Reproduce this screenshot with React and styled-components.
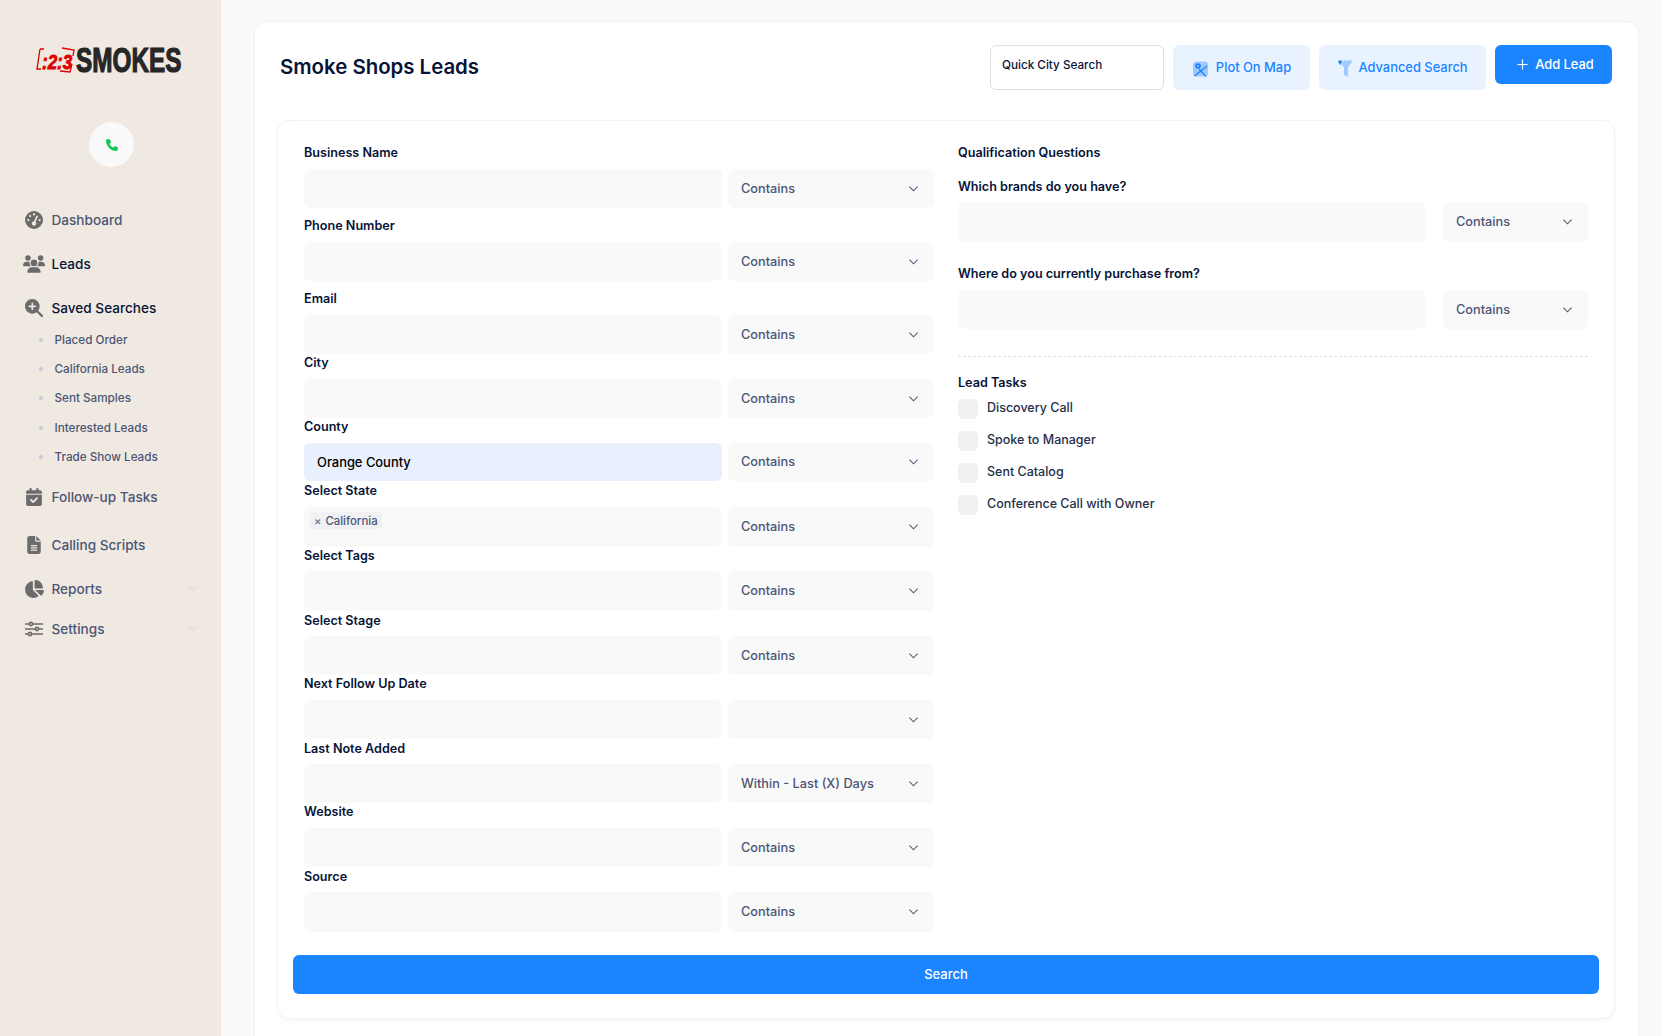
import React from 'react';
import styled, { createGlobalStyle } from 'styled-components';
import { FaGaugeHigh, FaUsers, FaMagnifyingGlassPlus, FaCalendarCheck, FaFileLines, FaChartPie, FaPhone } from 'react-icons/fa6';

const ink = '#071437';
const gray = '#4b5675';
const blue = '#1b84ff';
const solid = '#f9f9f9';

const GlobalStyle = createGlobalStyle`
  html, body {
    margin: 0;
    height: 100%;
    overflow: hidden;
  }
  body {
    font-family: Inter, "Liberation Sans", sans-serif;
    background: #f9fafc;
  }
  * {
    box-sizing: border-box;
  }
`;

const Page = styled.div`
  display: grid;
  grid-template-columns: 221px 1fr;
  height: 1036px;
  overflow: hidden;
`;

const Sidebar = styled.aside`
  background: #f0e9e1;
  padding-top: 40px;
`;

const LogoWrap = styled.div`
  height: 38px;
  padding-left: 34px;
`;

const CallButton = styled.button`
  display: flex;
  align-items: center;
  justify-content: center;
  width: 45px;
  height: 45px;
  margin: 44px 0 0 89px;
  padding: 0;
  border: 0;
  border-radius: 50%;
  background: ${solid};
  color: #17c653;
  font-size: 12px;
`;

const Nav = styled.nav`
  margin-top: 31px;
  padding: 0 24px 0 22px;
`;

const NavItem = styled.div`
  display: flex;
  align-items: center;
  height: ${p => p.$h || 44}px;
  margin-top: ${p => p.$mt || 0}px;
  font-size: 13.6px;
  font-weight: 500;
  color: ${p => (p.$active ? ink : gray)};
`;

const NavIcon = styled.span`
  display: flex;
  align-items: center;
  justify-content: center;
  flex: 0 0 24px;
  margin-right: 5.5px;
  color: #6b6b6b;
  font-size: ${p => p.$size || 18}px;
`;

const NavLabel = styled.span`
  flex: 1;
`;

const SubList = styled.div`
  margin-top: -5px;
`;

const SubItem = styled.div`
  display: flex;
  align-items: center;
  height: 29.4px;
  padding-left: 16.5px;
  font-size: 11.7px;
  font-weight: 500;
  color: ${gray};

  &::before {
    content: '';
    width: 4px;
    height: 4px;
    margin-right: 12px;
    border-radius: 50%;
    background: #c4cada;
  }
`;

const Main = styled.main`
  padding: 21px 22px 0 33px;
`;

const Card = styled.section`
  height: 1100px;
  padding: 0 23px 0 22px;
  background: #fff;
  border: 1px solid #f1f1f4;
  border-radius: 12px;
  box-shadow: 0 3px 4px rgba(0, 0, 0, 0.02);
`;

const Header = styled.header`
  display: flex;
  align-items: flex-start;
  justify-content: space-between;
  height: 98px;
  padding: 23px 3px 0 3px;
`;

const Title = styled.h1`
  margin: 10px 0 0;
  font-size: 20.4px;
  line-height: 24px;
  font-weight: 600;
  color: ${ink};
`;

const Actions = styled.div`
  display: flex;
  gap: 9px;
`;

const QuickSearch = styled.div`
  width: 174px;
  height: 45px;
  padding: 11px 11px 0;
  border: 1px solid #dbdfe9;
  border-radius: 6px;
  font-size: 11.7px;
  line-height: 16px;
  font-weight: 500;
  color: ${ink};
`;

const LightButton = styled.button`
  display: flex;
  align-items: center;
  justify-content: center;
  gap: ${p => p.$gap}px;
  width: ${p => p.$w}px;
  height: 45px;
  padding: 0 0 0 1px;
  border: 0;
  border-radius: 6px;
  background: #e9f3ff;
  color: ${blue};
  font: 500 12.9px Inter, sans-serif;

  svg {
    margin-top: 2px;
  }
`;

const PrimaryButton = styled.button`
  display: flex;
  align-items: center;
  justify-content: center;
  gap: 7px;
  width: 117px;
  height: 39px;
  padding: 0 0 0 4px;
  border: 0;
  border-radius: 6px;
  background: ${blue};
  color: #fff;
  font: 500 12.9px Inter, sans-serif;
`;

const InnerCard = styled.div`
  height: 899px;
  padding: 23px 15px 0;
  border: 1px solid #f1f1f4;
  border-radius: 12px;
  box-shadow: 0 3px 4px rgba(0, 0, 0, 0.03);
`;

const Columns = styled.div`
  display: grid;
  grid-template-columns: 630px 630px;
  gap: 24px;
  padding-left: 11px;
`;

const Field = styled.div`
  margin-top: ${p => p.$mt || 0}px;
`;

const Label = styled.label`
  display: block;
  height: 16px;
  margin-bottom: ${p => p.$gap ?? 9}px;
  font-size: 12.6px;
  line-height: 18px;
  font-weight: 600;
  color: ${ink};
`;

const FieldRow = styled.div`
  display: grid;
  grid-template-columns: 418px 206px;
  gap: 6px;
  height: ${p => p.$h || 39}px;
`;

const QuestionRow = styled(FieldRow)`
  grid-template-columns: 468px 145px;
  gap: 17px;
`;

const Input = styled.div`
  display: flex;
  align-items: center;
  padding: 0 13px;
  border-radius: 6px;
  background: ${p => (p.$filled ? '#e8f0fe' : solid)};
  font-size: 12.9px;
  font-weight: 500;
  color: #000;
`;

const TagInput = styled(Input)`
  align-items: flex-start;
  padding: 5px 6px 0;
`;

const Tag = styled.span`
  display: flex;
  align-items: center;
  gap: 4px;
  height: 17px;
  padding: 0 4px;
  border-radius: 4px;
  background: #f1f1f4;
  font-size: 11.4px;
  font-weight: 500;
  color: ${gray};

  b {
    font-weight: 600;
    font-size: 11px;
    color: #78829d;
  }
`;

const Select = styled.div`
  display: flex;
  align-items: center;
  justify-content: space-between;
  padding: 0 15px 1px 13px;
  border-radius: 6px;
  background: ${solid};
  font-size: 12.75px;
  font-weight: 500;
  color: ${gray};
`;

const SearchButton = styled.button`
  display: block;
  width: 100%;
  height: 39px;
  margin-top: 23px;
  padding: 0 0 1px;
  border: 0;
  border-radius: 6px;
  background: ${blue};
  color: #fff;
  font: 500 13px Inter, sans-serif;
`;

const SectionTitle = styled.h3`
  height: 16px;
  margin: ${p => p.$mt || 0}px 0 ${p => p.$mb || 0}px;
  font-size: 12.6px;
  line-height: 18px;
  font-weight: 600;
  color: ${ink};
`;

const Divider = styled.div`
  margin-top: 27px;
  border-top: 1px dashed #dbdfe9;
`;

const TaskList = styled.div`
  display: grid;
  grid-auto-rows: 32px;
  margin-top: 9px;
`;

const Task = styled.div`
  display: flex;
  align-items: flex-start;
  gap: 9px;
  font-size: 12.5px;
  line-height: 18px;
  font-weight: 500;
  color: #252f4a;
`;

const Check = styled.span`
  flex: 0 0 20px;
  height: 20px;
  border-radius: 5px;
  background: #f1f1f4;
`;

const Chevron = ({ color = '#4b5675', size = 11 }) => (
  <svg width={size} height={size} viewBox="0 0 12 12" fill="none" stroke={color} strokeWidth="1.1">
    <path d="M1.5 4l4.5 4.5L10.5 4" />
  </svg>
);

const SlidersIcon = () => (
  <svg width="18" height="16" viewBox="0 0 18 16" fill="none" stroke="currentColor" strokeWidth="1.6">
    <path d="M0 3h4.5M7.5 3H18M0 8h10.500M13.500 8H18M0 13h3.500M6.500 13H18" />
    <circle cx="6" cy="3" r="1.6" />
    <circle cx="12" cy="8" r="1.6" />
    <circle cx="5" cy="13" r="1.6" />
  </svg>
);

const MapIcon = () => (
  <svg width="15" height="16" viewBox="0 0 15 16">
    <rect x="0" y="0.500" width="15" height="15" rx="3.500" fill="#9fc9ff" />
    <path d="M1.500 15L14 5M6 8l7 7.500" stroke="#1b84ff" strokeWidth="1.300" fill="none" />
    <circle cx="5" cy="5" r="2.800" fill="#1b84ff" />
    <circle cx="5" cy="5" r="1" fill="#9fc9ff" />
  </svg>
);

const FunnelIcon = () => (
  <svg width="14" height="17" viewBox="0 0 14 17">
    <path d="M5.500 .5H13c1 0 1.200 1 .7 1.800L10 7.500V15c0 1.500-1.200 1.800-2.200 1L6 14.500V7.500L4 5z" fill="#9fc9ff" />
    <path d="M1 .5h3.300L2.800 5.200 .4 2.300C0 1.500 .3 .5 1 .5z" fill="#1b84ff" />
  </svg>
);

const Logo = () => (
  <svg width="150" height="38" viewBox="0 0 150 38">
    <path d="M6 9L3 29h4M6 9h4M28 8l12 2-1 6M38 24l-2 8-10-1" fill="none" stroke="#e00000" strokeWidth="1.300" />
    <text transform="translate(8 29) scale(.85 1)" fontFamily="Liberation Sans" fontWeight="700" fontStyle="italic" fontSize="20" fill="#e00000" stroke="#e00000" strokeWidth=".8">:2:3</text>
    <text transform="translate(42 32) scale(.695 1)" fontFamily="Liberation Sans" fontWeight="700" fontSize="35" fill="#262626" stroke="#262626" strokeWidth="1.200">SMOKES</text>
  </svg>
);

const subItems = ['Placed Order', 'California Leads', 'Sent Samples', 'Interested Leads', 'Trade Show Leads'];

const fields = [
  { label: 'Business Name' },
  { label: 'Phone Number', mt: 9 },
  { label: 'Email', mt: 9 },
  { label: 'City' },
  { label: 'County', value: 'Orange County', h: 38 },
  { label: 'Select State', mt: 1, tag: 'California', h: 40 },
  { label: 'Select Tags', gap: 8, h: 40 },
  { label: 'Select Stage', mt: 1, gap: 8 },
  { label: 'Next Follow Up Date', op: '' },
  { label: 'Last Note Added', mt: 1, gap: 8, op: 'Within - Last (X) Days' },
  { label: 'Website' },
  { label: 'Source', mt: 1, gap: 8, h: 40 },
];

const tasks = ['Discovery Call', 'Spoke to Manager', 'Sent Catalog', 'Conference Call with Owner'];

export default function App() {
  return (
    <Page>
      <GlobalStyle />
      <Sidebar>
        <LogoWrap>
          <Logo />
        </LogoWrap>
        <CallButton>
          <FaPhone />
        </CallButton>
        <Nav>
          <NavItem>
            <NavIcon><FaGaugeHigh /></NavIcon>
            <NavLabel>Dashboard</NavLabel>
          </NavItem>
          <NavItem $active>
            <NavIcon $size={22}><FaUsers /></NavIcon>
            <NavLabel>Leads</NavLabel>
          </NavItem>
          <NavItem $active>
            <NavIcon><FaMagnifyingGlassPlus /></NavIcon>
            <NavLabel>Saved Searches</NavLabel>
          </NavItem>
          <SubList>
            {subItems.map(s => <SubItem key={s}>{s}</SubItem>)}
          </SubList>
          <NavItem $h={51}>
            <NavIcon><FaCalendarCheck /></NavIcon>
            <NavLabel>Follow-up Tasks</NavLabel>
          </NavItem>
          <NavItem>
            <NavIcon><FaFileLines /></NavIcon>
            <NavLabel>Calling Scripts</NavLabel>
          </NavItem>
          <NavItem $h={40} $mt={2}>
            <NavIcon $size={20}><FaChartPie /></NavIcon>
            <NavLabel>Reports</NavLabel>
            <Chevron color="#c4cada" size={9} />
          </NavItem>
          <NavItem $h={40}>
            <NavIcon><SlidersIcon /></NavIcon>
            <NavLabel>Settings</NavLabel>
            <Chevron color="#c4cada" size={9} />
          </NavItem>
        </Nav>
      </Sidebar>
      <Main>
        <Card>
          <Header>
            <Title>Smoke Shops Leads</Title>
            <Actions>
              <QuickSearch>Quick City Search</QuickSearch>
              <LightButton $w={137} $gap={8}><MapIcon />Plot On Map</LightButton>
              <LightButton $w={167} $gap={6}><FunnelIcon />Advanced Search</LightButton>
              <PrimaryButton>
                <svg width="11" height="11" viewBox="0 0 12 12" stroke="#fff" strokeWidth="1.300"><path d="M6 .5v11M.5 6h11" /></svg>
                Add Lead
              </PrimaryButton>
            </Actions>
          </Header>
          <InnerCard>
            <Columns>
              <div>
                {fields.map(f => (
                  <Field key={f.label} $mt={f.mt}>
                    <Label $gap={f.gap}>{f.label}</Label>
                    <FieldRow $h={f.h}>
                      {f.tag ? (
                        <TagInput><Tag><b>×</b>{f.tag}</Tag></TagInput>
                      ) : (
                        <Input $filled={!!f.value}>{f.value}</Input>
                      )}
                      <Select>
                        <span>{f.op ?? 'Contains'}</span>
                        <Chevron />
                      </Select>
                    </FieldRow>
                  </Field>
                ))}
              </div>
              <div>
                <SectionTitle>Qualification Questions</SectionTitle>
                <Field $mt={18}>
                  <Label $gap={8}>Which brands do you have?</Label>
                  <QuestionRow $h={40}>
                    <Input />
                    <Select><span>Contains</span><Chevron /></Select>
                  </QuestionRow>
                </Field>
                <Field $mt={23}>
                  <Label>Where do you currently purchase from?</Label>
                  <QuestionRow>
                    <Input />
                    <Select><span>Contains</span><Chevron /></Select>
                  </QuestionRow>
                </Field>
                <Divider />
                <SectionTitle $mt={17}>Lead Tasks</SectionTitle>
                <TaskList>
                  {tasks.map(t => <Task key={t}><Check />{t}</Task>)}
                </TaskList>
              </div>
            </Columns>
            <SearchButton>Search</SearchButton>
          </InnerCard>
        </Card>
      </Main>
    </Page>
  );
}
